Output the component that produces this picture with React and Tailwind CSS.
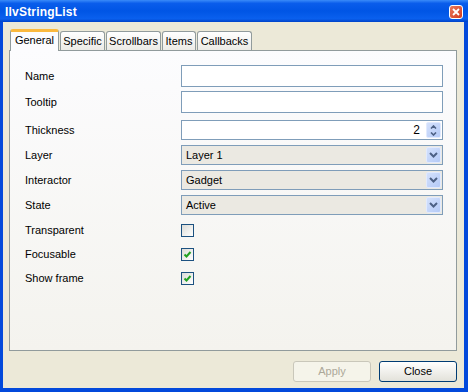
import React from "react";

const Chevron = () => (
  <svg width="9" height="6" viewBox="0 0 9 6">
    <path d="M1 1 L4.5 4.5 L8 1" fill="none" stroke="#4D6185" strokeWidth="2" />
  </svg>
);

const DropButton = () => (
  <div className="m-[1px] w-[15px] flex items-center justify-center rounded-[2px] border border-[#E1EAFE] bg-linear-to-br from-[#D4E1FC] to-[#B4CAF7]">
    <Chevron />
  </div>
);

const Spinner = () => (
  <div className="m-[1px] w-[15px] flex flex-col rounded-[2px] border border-[#E1EAFE] bg-linear-to-br from-[#D4E1FC] to-[#B4CAF7]">
    <div className="flex-1 flex items-center justify-center">
      <svg width="7" height="4" viewBox="0 0 7 4">
        <path d="M1 3.5 L3.5 1 L6 3.5" fill="none" stroke="#4D6185" strokeWidth="1.6" />
      </svg>
    </div>
    <div className="flex-1 flex items-center justify-center">
      <svg width="7" height="4" viewBox="0 0 7 4">
        <path d="M1 0.5 L3.5 3 L6 0.5" fill="none" stroke="#4D6185" strokeWidth="1.6" />
      </svg>
    </div>
  </div>
);

const Checkbox = ({ checked }) => (
  <div className="w-[13px] h-[13px] border border-[#1C5180] bg-linear-to-br from-[#DCDCD7] to-white flex items-center justify-center">
    {checked && (
      <svg width="9" height="9" viewBox="0 0 9 9">
        <path d="M1.5 4.5 L3.5 6.5 L7.5 2" fill="none" stroke="#21A121" strokeWidth="2" />
      </svg>
    )}
  </div>
);

const Row = ({ label, className = "", children }) => (
  <div className={`flex items-center ${className}`}>
    <span className="w-[156px]">{label}</span>
    <div className="flex-1 flex">{children}</div>
  </div>
);

const TextField = () => (
  <div className="w-full h-[22px] border border-[#7F9DB9] bg-white" />
);

const Combo = ({ value }) => (
  <div className="w-full h-[20px] border border-[#7F9DB9] bg-[#EBE9E2] flex">
    <span className="flex-1 pl-[4px] flex items-center">{value}</span>
    <DropButton />
  </div>
);

const tabs = [
  { name: "General", w: "w-[49px]", active: true },
  { name: "Specific", w: "w-[45px]" },
  { name: "Scrollbars", w: "w-[55px]" },
  { name: "Items", w: "w-[34px]" },
  { name: "Callbacks", w: "w-[55px]" },
];

export default function App() {
  return (
    <div className="w-[468px] h-[392px] flex flex-col font-['Liberation_Sans',Arial,sans-serif] text-[11px] text-black">
      {/* Title bar */}
      <div className="h-[22px] flex items-center justify-between pl-[5px] pr-[5px] bg-[linear-gradient(to_bottom,#3A8BF9_0%,#0A5DEB_15%,#0055E5_50%,#0A60EE_85%,#0042C8_100%)]">
        <span className="text-white font-bold text-[12px] mt-[2px] tracking-[0.2px]">IlvStringList</span>
        <div className="w-[14px] h-[14px] mt-[2px] rounded-[3px] border border-white bg-linear-to-br from-[#E9775A] to-[#D3391C] flex items-center justify-center">
          <svg width="8" height="8" viewBox="0 0 8 8">
            <path d="M1 1 L7 7 M7 1 L1 7" stroke="white" strokeWidth="1.8" />
          </svg>
        </div>
      </div>

      {/* Body */}
      <div className="flex-1 flex flex-col bg-[#ECE9D8] border-l-[3px] border-r-[4px] border-b-[4px] border-[#0349DB] pt-[7px] pl-[6px] pr-[7px] pb-[6px]">
        {/* Tabs */}
        <div className="h-[21px] flex items-end gap-[1px] pl-[1px]">
          {tabs.map((t) =>
            t.active ? (
              <div
                key={t.name}
                className={`${t.w} h-[22px] -mb-[1px] relative z-10 bg-[#FCFCFE] border-x border-[#919B9C] border-t-[3px] border-t-[#FBB93E] rounded-t-[3px] flex items-center justify-center pb-[2px]`}
              >
                {t.name}
              </div>
            ) : (
              <div
                key={t.name}
                className={`${t.w} h-[19px] bg-linear-to-b from-white to-[#ECEBE6] border-x border-t border-[#919B9C] rounded-t-[3px] flex items-center justify-center`}
              >
                {t.name}
              </div>
            )
          )}
        </div>

        {/* Panel */}
        <div className="h-[301px] border border-[#919B9C] bg-linear-to-b from-[#FCFCFE] to-[#F4F3EE] pl-[15px] pr-[13px] pt-[14px] flex flex-col">
          <Row label="Name">
            <TextField />
          </Row>
          <Row label="Tooltip" className="mt-[4px]">
            <TextField />
          </Row>
          <Row label="Thickness" className="mt-[7px]">
            <div className="w-full h-[20px] border border-[#7F9DB9] bg-white flex">
              <span className="flex-1 flex items-center justify-end pr-[5px] text-[12px]">2</span>
              <Spinner />
            </div>
          </Row>
          <Row label="Layer" className="mt-[5px]">
            <Combo value="Layer 1" />
          </Row>
          <Row label="Interactor" className="mt-[5px]">
            <Combo value="Gadget" />
          </Row>
          <Row label="State" className="mt-[5px]">
            <Combo value="Active" />
          </Row>
          <Row label="Transparent" className="mt-[3px] h-[24px]">
            <Checkbox />
          </Row>
          <Row label="Focusable" className="h-[24px]">
            <Checkbox checked />
          </Row>
          <Row label="Show frame" className="h-[24px]">
            <Checkbox checked />
          </Row>
        </div>

        {/* Buttons */}
        <div className="mt-[10px] flex justify-end gap-[8px]">
          <button className="w-[78px] h-[21px] rounded-[3px] border border-[#C9C7BA] bg-[#F5F4EA] text-[#ACA899]">
            Apply
          </button>
          <button className="w-[78px] h-[21px] rounded-[3px] border border-[#003C74] bg-linear-to-b from-white to-[#E3E2DA]">
            Close
          </button>
        </div>
      </div>
    </div>
  );
}
